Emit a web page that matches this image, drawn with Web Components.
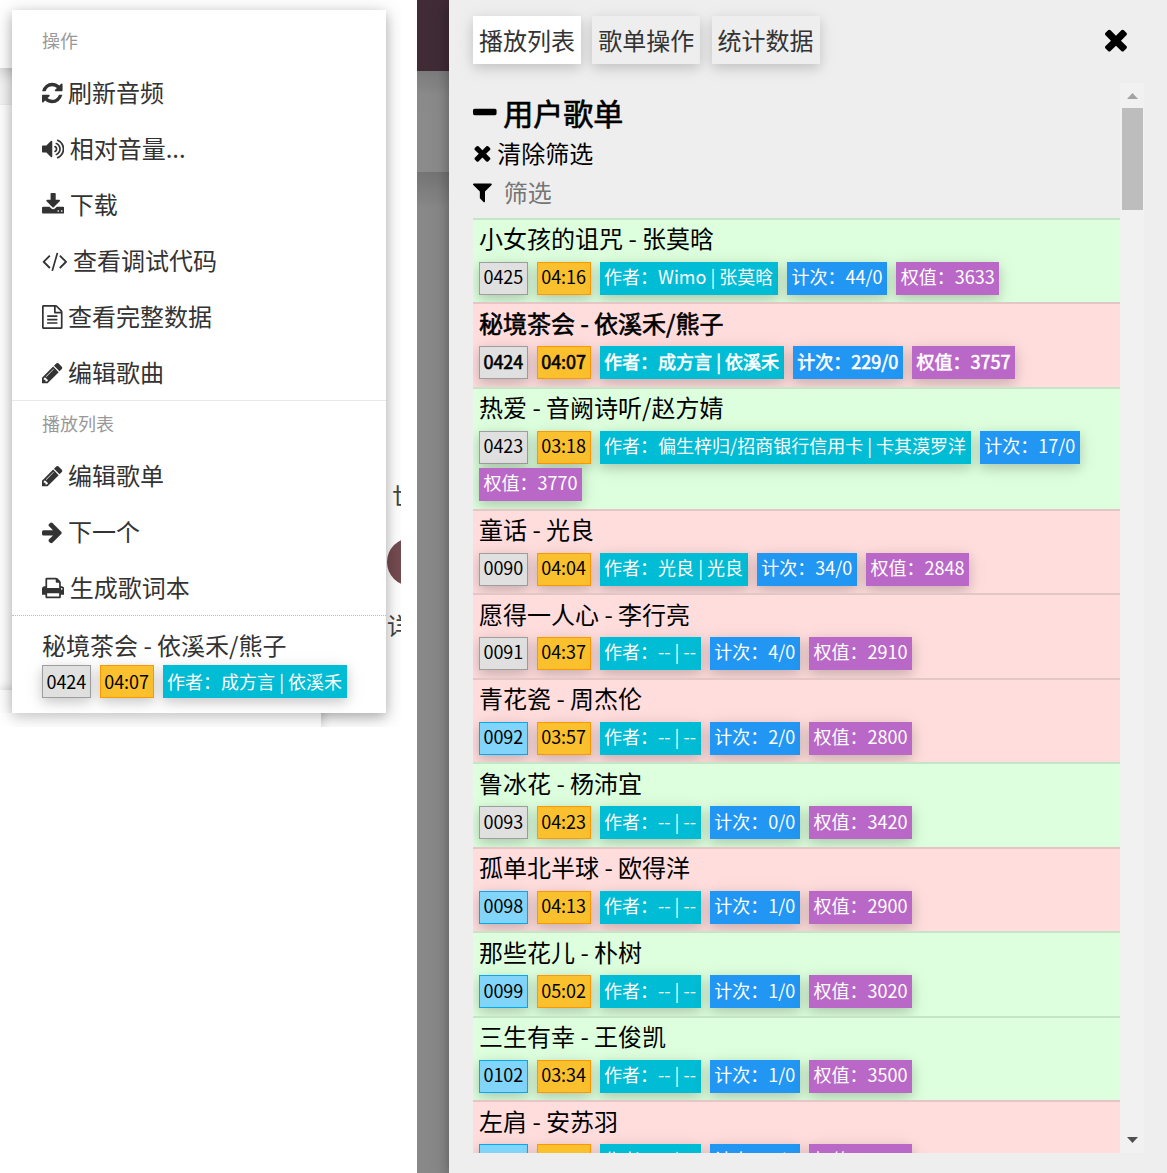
<!DOCTYPE html>
<html lang="zh-CN">
<head>
<meta charset="utf-8">
<title>播放列表</title>
<style>
  html,body{margin:0;height:100%;overflow:hidden;background:#fff}
  body{font-family:"Noto Sans CJK SC","Noto Sans",sans-serif}
</style>
</head>
<body>
<app-shell></app-shell>
<script>
const FONT = `"Noto Sans CJK SC","Noto Sans",sans-serif`;
// font-awesome 4 glyphs: [viewBox x, advance, path]
const ICONS = {
  refresh: [128, 1536, "M1639 1056q0 5-1 7-64 268-268 434.5t-478 166.5q-146 0-282.5-55t-243.5-157l-129 129q-19 19-45 19t-45-19-19-45v-448q0-26 19-45t45-19h448q26 0 45 19t19 45-19 45l-137 137q71 66 161 102t187 36q134 0 250-65t186-179q11-17 53-117 8-23 30-23h192q13 0 22.5 9.5t9.5 22.5zm25-800v448q0 26-19 45t-45 19h-448q-26 0-45-19t-19-45 19-45l138-138q-148-137-349-137-134 0-250 65t-186 179q-11 17-53 117-8 23-30 23h-199q-13 0-22.5-9.5t-9.5-22.5v-7q65-268 270-434.5t480-166.5q146 0 284 55.5t245 156.5l130-129q19-19 45-19t45 19 19 45z"],
  volume: [64, 1664, "M832 352v1088q0 26-19 45t-45 19-45-19l-333-333h-262q-26 0-45-19t-19-45v-384q0-26 19-45t45-19h262l333-333q19-19 45-19t45 19 19 45zm384 544q0 76-42.5 141.5t-112.5 93.5q-10 5-25 5-26 0-45-18.5t-19-45.5q0-21 12-35.5t29-25 34-23 29-35.5 12-57-12-57-29-35.5-34-23-29-25-12-35.5q0-27 19-45.5t45-18.5q15 0 25 5 70 27 112.5 93t42.5 142zm256 0q0 153-85 282.5t-225 188.5q-13 5-25 5-27 0-46-19t-19-45q0-39 39-59 56-29 76-44 74-54 115.5-135.5t41.5-173.5-41.5-173.5-115.5-135.5q-20-15-76-44-39-20-39-59 0-26 19-45t45-19q13 0 26 5 140 59 225 188.5t85 282.5zm256 0q0 230-127 422.5t-338 283.5q-13 5-26 5-26 0-45-19t-19-45q0-36 39-59 7-4 22.5-10.5t22.5-10.5q46-25 82-51 123-91 192-227t69-289-69-289-192-227q-36-26-82-51-7-4-22.5-10.5t-22.5-10.5q-39-23-39-59 0-26 19-45t45-19q13 0 26 5 211 91 338 283.5t127 422.5z"],
  download: [64, 1664, "M1344 1344q0-26-19-45t-45-19-45 19-19 45 19 45 45 19 45-19 19-45zm256 0q0-26-19-45t-45-19-45 19-19 45 19 45 45 19 45-19 19-45zm128-224v320q0 40-28 68t-68 28h-1472q-40 0-68-28t-28-68v-320q0-40 28-68t68-28h465l135 136q58 56 136 56t136-56l136-136h464q40 0 68 28t28 68zm-325-569q17 41-14 70l-448 448q-18 19-45 19t-45-19l-448-448q-31-29-14-70 17-39 59-39h256v-448q0-26 19-45t45-19h256q26 0 45 19t19 45v448h256q42 0 59 39z"],
  code: [-64, 1920, "M553 1399l-50 50q-10 10-23 10t-23-10l-466-466q-10-10-10-23t10-23l466-466q10-10 23-10t23 10l50 50q10 10 10 23t-10 23l-393 393 393 393q10 10 10 23t-10 23zm591-1067l-373 1291q-4 13-15.5 19.5t-23.5 2.5l-62-17q-13-4-19.5-15.5t-2.5-24.5l373-1291q4-13 15.5-19.5t23.5-2.5l62 17q13 4 19.5 15.5t2.5 24.5zm657 651l-466 466q-10 10-23 10t-23-10l-50-50q-10-10-10-23t10-23l393-393-393-393q-10-10-10-23t10-23l50-50q10-10 23-10t23 10l466 466q10 10 10 23t-10 23z"],
  file: [128, 1536, "M1596 380q28 28 48 76t20 88v1152q0 40-28 68t-68 28h-1344q-40 0-68-28t-28-68v-1600q0-40 28-68t68-28h896q40 0 88 20t76 48zm-444-244v376h376q-10-29-22-41l-313-313q-12-12-41-22zm384 1528v-1024h-416q-40 0-68-28t-28-68v-416h-768v1536h1280zm-1024-864q0-14 9-23t23-9h704q14 0 23 9t9 23v64q0 14-9 23t-23 9h-704q-14 0-23-9t-9-23v-64zm736 224q14 0 23 9t9 23v64q0 14-9 23t-23 9h-704q-14 0-23-9t-9-23v-64q0-14 9-23t23-9h704zm0 256q14 0 23 9t9 23v64q0 14-9 23t-23 9h-704q-14 0-23-9t-9-23v-64q0-14 9-23t23-9h704z"],
  pencil: [128, 1536, "M491 1536l91-91-235-235-91 91v107h128v128h107zm523-928q0-22-22-22-10 0-17 7l-542 542q-7 7-7 17 0 22 22 22 10 0 17-7l542-542q7-7 7-17zm-54-192l416 416-832 832h-416v-416zm683 96q0 53-37 90l-166 166-416-416 166-165q36-38 90-38 53 0 91 38l235 234q37 39 37 91z"],
  arrow: [128, 1536, "M1600 960q0 54-37 91l-651 651q-39 37-91 37-51 0-90-37l-75-75q-38-38-38-91t38-91l293-293h-704q-52 0-84.5-37.5t-32.5-90.5v-128q0-53 32.5-90.5t84.5-37.5h704l-293-294q-38-36-38-90t38-90l75-75q38-38 90-38 53 0 91 38l651 651q37 35 37 90z"],
  print: [64, 1664, "M448 1536h896v-256h-896v256zm0-640h896v-384h-160q-40 0-68-28t-28-68v-160h-640v640zm1152 64q0-26-19-45t-45-19-45 19-19 45 19 45 45 19 45-19 19-45zm128 0v416q0 13-9.5 22.5t-22.5 9.5h-224v160q0 40-28 68t-68 28h-960q-40 0-68-28t-28-68v-160h-224q-13 0-22.5-9.5t-9.5-22.5v-416q0-79 56.5-135.5t135.5-56.5h64v-544q0-40 28-68t68-28h672q40 0 88 20t76 48l152 152q28 28 48 76t20 88v256h64q79 0 135.5 56.5t56.5 135.5z"],
  minus: [192, 1408, "M1600 736v192q0 40-28 68t-68 28h-1216q-40 0-68-28t-28-68v-192q0-40 28-68t68-28h1216q40 0 68 28t28 68z"],
  times: [192, 1408, "M1490 1322q0 40-28 68l-136 136q-28 28-68 28t-68-28l-294-294-294 294q-28 28-68 28t-68-28l-136-136q-28-28-28-68t28-68l294-294-294-294q-28-28-28-68t28-68l136-136q28-28 68-28t68 28l294 294 294-294q28-28 68-28t68 28l136 136q28 28 28 68t-28 68l-294 294 294 294q28 28 28 68z"],
  filter: [192, 1408, "M1595 295q17 41-14 70l-493 493v742q0 42-39 59-13 5-25 5-27 0-45-19l-256-256q-19-19-19-45v-486l-493-493q-31-29-14-70 17-39 59-39h1280q42 0 59 39z"]
};

class FaIcon extends HTMLElement {
  constructor() { super(); this.attachShadow({ mode: "open" }); }
  connectedCallback() {
    const [x, adv, d] = ICONS[this.getAttribute("name")];
    const s = +this.getAttribute("size") || 24;
    this.shadowRoot.innerHTML = `<style>:host{display:inline-flex;flex:none}svg{display:block;fill:currentColor}</style>
      <svg width="${s * adv / 1792}" height="${s}" viewBox="${x} 0 ${adv} 1792"><path d="${d}"/></svg>`;
  }
}

class SongTag extends HTMLElement {
  constructor() {
    super();
    this.attachShadow({ mode: "open" }).innerHTML = `<style>
      :host{display:block;height:33px;box-sizing:border-box;padding:var(--tag-drop,.35px) 4.6px 0;font-size:18px;line-height:29px;color:#fff;white-space:pre;
        box-shadow:0 4px 10px rgba(0,0,0,.14),0 4px 20px rgba(0,0,0,.1)}
      :host([kind=grey]),:host([kind=sky]),:host([kind=time]){color:#000;border:1px solid;line-height:27px;padding:var(--tag-drop,.35px) 3.4px 0}
      :host([kind=grey]){background:#e0e0e0;border-color:#9e9e9e}
      :host([kind=sky]){background:#81d4fa;border-color:#03a9f4}
      :host([kind=time]){background:#fbc02d;border-color:#ff9800}
      :host([kind=cyan]){background:#00bcd4}
      :host([kind=blue]){background:#2196f3}
      :host([kind=purple]){background:#ba68c8}
    </style><slot></slot>`;
  }
}

class SongTags extends HTMLElement {
  constructor() {
    super();
    this.attachShadow({ mode: "open" }).innerHTML = `<style>
      :host{display:flex;flex-wrap:wrap;gap:4.05px 9px}
    </style><slot></slot>`;
  }
}

class SongRow extends HTMLElement {
  constructor() {
    super();
    this.attachShadow({ mode: "open" }).innerHTML = `<style>
      :host{display:block;isolation:isolate;box-sizing:border-box;padding:.5px 6px 7.55px;border-top:2px solid rgba(0,0,0,.1);color:#000;flex:none}
      :host([tone=green]){background:#dfd}
      :host([tone=red]){background:#fdd}
      :host([bold]){-webkit-text-stroke:.6px currentColor}
      .name{font-size:24px;line-height:36px;margin-bottom:5.5px}
    </style><div class="name"><slot></slot></div><song-tags id="t"></song-tags>`;
  }
  connectedCallback() {
    const a = (n) => this.getAttribute(n);
    this.shadowRoot.getElementById("t").innerHTML = [
      [a("numtone"), a("num")], ["time", a("time")], ["cyan", "作者：" + a("author")],
      ["blue", "计次：" + a("count")], ["purple", "权值：" + a("weight")]
    ].map(([k, v]) => `<song-tag kind="${k}">${v}</song-tag>`).join("");
  }
}

class MenuItem extends HTMLElement {
  constructor() { super(); this.attachShadow({ mode: "open" }); }
  connectedCallback() {
    this.shadowRoot.innerHTML = `<style>
      :host{display:flex;align-items:center;gap:5.4px;height:56px;padding:0 30px 3px;box-sizing:border-box;font-size:24px;color:#333}
      fa-icon{margin-top:3px}
    </style><fa-icon name="${this.getAttribute("icon")}"></fa-icon><slot></slot>`;
  }
}

class ContextMenu extends HTMLElement {
  constructor() {
    super();
    this.attachShadow({ mode: "open" }).innerHTML = `<style>
      :host{position:absolute;left:12px;top:10px;width:374px;background:#fff;z-index:2;font-family:${FONT};
        box-shadow:0 4px 10px rgba(0,0,0,.2),0 4px 20px rgba(0,0,0,.19)}
      h4{margin:0;padding:0 30px;font-size:18px;line-height:27px;font-weight:400;color:#999}
      .a{padding-top:17px;padding-bottom:11px}
      .b{border-top:1px solid #e8e8e8;margin-top:-1px;padding-top:9px;padding-bottom:11px}
      .song{border-top:1px dotted #bbb;margin-top:-1px;padding:11px 30px 15px;color:#333;--tag-drop:1.5px}
      .song div{font-size:24px;line-height:36px;margin-bottom:2px}
    </style>
    <h4 class="a">操作</h4>
    <menu-item icon="refresh">刷新音频</menu-item>
    <menu-item icon="volume">相对音量...</menu-item>
    <menu-item icon="download">下载</menu-item>
    <menu-item icon="code">查看调试代码</menu-item>
    <menu-item icon="file">查看完整数据</menu-item>
    <menu-item icon="pencil">编辑歌曲</menu-item>
    <h4 class="b">播放列表</h4>
    <menu-item icon="pencil">编辑歌单</menu-item>
    <menu-item icon="arrow">下一个</menu-item>
    <menu-item icon="print">生成歌词本</menu-item>
    <section class="song">
      <div>秘境茶会 - 依溪禾/熊子</div>
      <song-tags>
        <song-tag kind="grey">0424</song-tag><song-tag kind="time">04:07</song-tag><song-tag kind="cyan">作者：成方言 | 依溪禾</song-tag>
      </song-tags>
    </section>`;
  }
}

// the page behind the menu, only slivers of it show
class PageBehind extends HTMLElement {
  constructor() {
    super();
    this.attachShadow({ mode: "open" }).innerHTML = `<style>
      :host{display:block;position:relative;width:401px;height:727px;overflow:hidden;background:#fff;font-family:${FONT}}
      .head{height:68px;width:300px;background:#fff;box-shadow:0 4px 14px rgba(0,0,0,.22);position:relative;clip-path:inset(0 0 -30px 0)}
      .band{height:36px;width:300px;background:#f4f4f4;border-bottom:1px solid #eee}
      .frag{position:absolute;font-size:24px;line-height:24px;color:#444}
      .dot{position:absolute;left:387px;top:538px;width:48px;height:48px;border-radius:50%;background:#754b50}
      .under{position:absolute;left:0;top:690px;width:321px;height:37px;background:#fff;box-shadow:0 0 12px rgba(0,0,0,.22)}
      .veil{position:absolute;z-index:3;left:0;top:713px;width:321px;height:14px;background:rgba(255,255,255,.35)}
    </style>
    <div class="head"></div><div class="band"></div>
    <div class="frag" style="left:392px;top:483px">世</div>
    <div class="dot"></div>
    <div class="frag" style="left:387px;top:613px">详</div>
    <div class="under"></div><div class="veil"></div>
    <slot></slot>`;
  }
}

class DimStrip extends HTMLElement {
  constructor() {
    super();
    this.attachShadow({ mode: "open" }).innerHTML = `<style>
      :host{display:flex;flex-direction:column;background:#888}
      .top{height:71px;background:#402b36}
      .s{height:41px;background:linear-gradient(#7c7c7c,#8a8a8a 60%)}
      .p{height:60px;background:#8b8b8b}
      .t{height:36px;background:linear-gradient(#747474,#888)}
    </style><div class="top"></div><div class="s"></div><div class="p"></div><div class="t"></div>`;
  }
}

class TabButton extends HTMLElement {
  constructor() {
    super();
    this.attachShadow({ mode: "open" }).innerHTML = `<style>
      :host{display:block;padding:0 6px;height:48px;font-size:24px;line-height:48px;color:#333;background:#eee;
        box-shadow:0 4px 10px rgba(0,0,0,.12),0 4px 20px rgba(0,0,0,.08)}
      :host([active]){background:#fff}
    </style><slot></slot>`;
  }
}

class ScrollRail extends HTMLElement {
  constructor() {
    super();
    this.attachShadow({ mode: "open" }).innerHTML = `<style>
      :host{display:flex;flex-direction:column;align-items:center;flex:none;width:24px;background:#f1f1f1;box-sizing:border-box}
      svg{display:block;flex:none}
      .up{margin-top:10px;fill:#a3a3a3}
      .thumb{flex:none;width:21px;height:102px;margin-top:9px;background:#bdbdbd}
      .down{margin-top:auto;margin-bottom:10px;fill:#505050}
    </style>
    <svg class="up" width="11" height="6" viewBox="0 0 11 6"><path d="M5.5 0L11 6H0z"/></svg>
    <div class="thumb"></div>
    <svg class="down" width="11" height="6" viewBox="0 0 11 6"><path d="M0 0h11L5.5 6z"/></svg>`;
  }
}

class PlaylistPanel extends HTMLElement {
  constructor() {
    super();
    const songs = [
      ["小女孩的诅咒 - 张莫晗", "green", "0425", "grey", "04:16", "Wimo | 张莫晗", "44/0", "3633"],
      ["秘境茶会 - 依溪禾/熊子", "red", "0424", "grey", "04:07", "成方言 | 依溪禾", "229/0", "3757", 1],
      ["热爱 - 音阙诗听/赵方婧", "green", "0423", "grey", "03:18", "偏生梓归/招商银行信用卡 | 卡其漠罗洋", "17/0", "3770"],
      ["童话 - 光良", "red", "0090", "grey", "04:04", "光良 | 光良", "34/0", "2848"],
      ["愿得一人心 - 李行亮", "red", "0091", "grey", "04:37", "-- | --", "4/0", "2910"],
      ["青花瓷 - 周杰伦", "red", "0092", "sky", "03:57", "-- | --", "2/0", "2800"],
      ["鲁冰花 - 杨沛宜", "green", "0093", "grey", "04:23", "-- | --", "0/0", "3420"],
      ["孤单北半球 - 欧得洋", "red", "0098", "sky", "04:13", "-- | --", "1/0", "2900"],
      ["那些花儿 - 朴树", "green", "0099", "sky", "05:02", "-- | --", "1/0", "3020"],
      ["三生有幸 - 王俊凯", "green", "0102", "sky", "03:34", "-- | --", "1/0", "3500"],
      ["左肩 - 安苏羽", "red", "0103", "sky", "04:12", "-- | --", "1/0", "3100"]
    ];
    const rows = songs.map(([t, tone, num, nt, time, author, count, weight, bold]) =>
      `<song-row tone="${tone}" num="${num}" numtone="${nt}" time="${time}" author="${author}" count="${count}" weight="${weight}"${bold ? " bold" : ""}>${t}</song-row>`).join("");
    this.attachShadow({ mode: "open" }).innerHTML = `<style>
      :host{display:flex;flex-direction:column;box-sizing:border-box;height:1173px;padding:16px 23px 20px 24px;background:#eee;color:#000;
        font-family:${FONT};position:relative;z-index:1;box-shadow:0 4px 10px rgba(0,0,0,.2),0 4px 20px rgba(0,0,0,.19)}
      .tabs{display:flex;gap:11.3px;align-items:flex-start;margin-bottom:19px}
      .close{margin:7px 15px 0 auto}
      .body{flex:1;min-height:0;display:flex}
      .scroll{flex:1;min-width:0;overflow:hidden;display:flex;flex-direction:column}
      h2{margin:7px 0 0;display:flex;align-items:center;gap:6.6px;font-size:30px;line-height:45px;font-weight:400;-webkit-text-stroke:.7px currentColor}
      .clear{display:flex;align-items:center;gap:5.4px;font-size:24px;line-height:36px;height:36px}
      .filter{display:flex;align-items:center;gap:12px;font-size:24px;line-height:36px;height:36px;margin:3px 0 7.9px;color:#000}
      .filter span{color:#757575}
    </style>
    <div class="tabs">
      <tab-button active>播放列表</tab-button><tab-button>歌单操作</tab-button><tab-button>统计数据</tab-button>
      <fa-icon class="close" name="times" size="33"></fa-icon>
    </div>
    <div class="body">
      <div class="scroll">
        <h2><fa-icon name="minus" size="30"></fa-icon>用户歌单</h2>
        <div class="clear"><fa-icon name="times"></fa-icon>清除筛选</div>
        <div class="filter"><fa-icon name="filter"></fa-icon><span>筛选</span></div>
        ${rows}
      </div>
      <scroll-rail></scroll-rail>
    </div>`;
  }
}

class AppShell extends HTMLElement {
  constructor() {
    super();
    this.attachShadow({ mode: "open" }).innerHTML = `<style>
      :host{display:grid;grid-template-columns:417px 32px 718px;height:1173px;width:1167px;overflow:hidden;background:#fff}
    </style>
    <div><page-behind><context-menu></context-menu></page-behind></div>
    <dim-strip></dim-strip>
    <playlist-panel></playlist-panel>`;
  }
}

customElements.define("fa-icon", FaIcon);
customElements.define("song-tag", SongTag);
customElements.define("song-tags", SongTags);
customElements.define("song-row", SongRow);
customElements.define("menu-item", MenuItem);
customElements.define("context-menu", ContextMenu);
customElements.define("page-behind", PageBehind);
customElements.define("dim-strip", DimStrip);
customElements.define("tab-button", TabButton);
customElements.define("scroll-rail", ScrollRail);
customElements.define("playlist-panel", PlaylistPanel);
customElements.define("app-shell", AppShell);
</script>
</body>
</html>
